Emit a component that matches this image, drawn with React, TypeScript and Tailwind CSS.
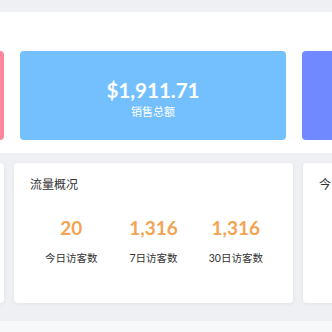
import React from "react";

const font = { fontFamily: 'Lato, "Noto Sans CJK SC", sans-serif' };

function Stat({ value, label }: { value: string; label: string }) {
  return (
    <div className="flex flex-1 flex-col items-center">
      <div className="text-[19px] font-bold leading-[24px] text-[#f3a453]">{value}</div>
      <div className="mt-[10px] text-[10.5px] leading-[16px] text-[#333]">{label}</div>
    </div>
  );
}

export default function App() {
  return (
    <div className="h-[332px] w-[332px] overflow-hidden bg-[#eef0f4]" style={font}>
      <div className="h-[12px]" />
      <div className="flex h-[141px] items-start bg-white pt-[39px]">
        <div className="ml-[-262px] flex shrink-0 gap-[16px]">
          <div className="h-[89px] w-[266px] shrink-0 rounded-[4px] bg-[#ff869c]" />
          <div className="flex h-[89px] w-[266px] shrink-0 flex-col items-center justify-center rounded-[4px] bg-[#74c0ff] pt-[5px] text-white">
            <div className="text-[20.5px] font-bold leading-[26px]">$1,911.71</div>
            <div className="mt-[1px] text-[11px] leading-[16px]">销售总额</div>
          </div>
          <div className="h-[89px] w-[266px] shrink-0 rounded-[4px] bg-[#7089ff]" />
        </div>
      </div>
      <div className="ml-[-275px] mt-[10px] flex shrink-0 gap-[10px]">
        <div className="h-[140px] w-[279px] shrink-0 rounded-[4px] bg-white shadow-[0_1px_4px_rgba(0,0,0,0.06)]" />
        <div className="h-[140px] w-[279px] shrink-0 rounded-[4px] bg-white px-[16px] pt-[14px] shadow-[0_1px_4px_rgba(0,0,0,0.06)]">
          <div className="text-[12px] leading-[16px] text-[#333]">流量概况</div>
          <div className="mt-[23px] flex">
            <Stat value="20" label="今日访客数" />
            <Stat value="1,316" label="7日访客数" />
            <Stat value="1,316" label="30日访客数" />
          </div>
        </div>
        <div className="h-[140px] w-[279px] shrink-0 rounded-[4px] bg-white px-[16px] pt-[14px] shadow-[0_1px_4px_rgba(0,0,0,0.06)]">
          <div className="text-[12px] leading-[16px] text-[#333]">今日</div>
        </div>
      </div>
      <div className="mt-[18px] h-[20px] bg-[#f7f8fa]" />
    </div>
  );
}
